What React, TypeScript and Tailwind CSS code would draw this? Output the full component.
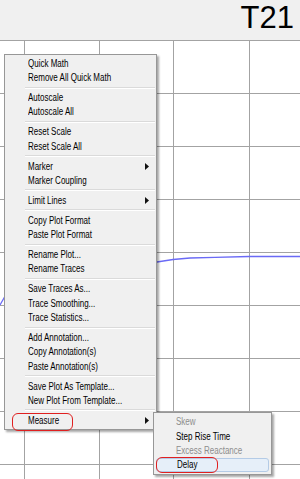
type Entry = { label: string; arrow?: boolean } | null;

const menu: Entry[] = [
  { label: "Quick Math" },
  { label: "Remove All Quick Math" },
  null,
  { label: "Autoscale" },
  { label: "Autoscale All" },
  null,
  { label: "Reset Scale" },
  { label: "Reset Scale All" },
  null,
  { label: "Marker", arrow: true },
  { label: "Marker Coupling" },
  null,
  { label: "Limit Lines", arrow: true },
  null,
  { label: "Copy Plot Format" },
  { label: "Paste Plot Format" },
  null,
  { label: "Rename Plot..." },
  { label: "Rename Traces" },
  null,
  { label: "Save Traces As..." },
  { label: "Trace Smoothing..." },
  { label: "Trace Statistics..." },
  null,
  { label: "Add Annotation..." },
  { label: "Copy Annotation(s)" },
  { label: "Paste Annotation(s)" },
  null,
  { label: "Save Plot As Template..." },
  { label: "New Plot From Template..." },
  null,
  { label: "Measure", arrow: true },
];

const sub = [
  { label: "Skew", disabled: true },
  { label: "Step Rise Time" },
  { label: "Excess Reactance", disabled: true },
  { label: "Delay", hot: true },
];

function Arrow() {
  return (
    <svg width="4" height="7" viewBox="0 0 4 7" className="ml-auto mr-[7px]">
      <path d="M0 0 L4 3.5 L0 7 Z" fill="#111" />
    </svg>
  );
}

function Label({ text }: { text: string }) {
  return <span className="inline-block origin-left scale-x-[0.8] whitespace-nowrap">{text}</span>;
}

function PlotGrid() {
  const xs = [24.5, 99.5, 173.5, 249.5];
  const ys = [93, 146, 199, 252, 305, 358, 411, 464].map((y) => y - 41 + 0.5);
  return (
    <svg width="300" height="438" viewBox="0 0 300 438" className="block">
      {xs.map((x) => (
        <line key={x} x1={x} y1={0} x2={x} y2={438} stroke="#a3a3a3" strokeWidth="1" />
      ))}
      {ys.map((y) => (
        <line key={y} x1={0} y1={y} x2={300} y2={y} stroke="#a3a3a3" strokeWidth="1" />
      ))}
      <polyline
        points="0,264 8,250 30,238 60,230 100,226 157,221 173,218.5 190,217 215,216.3 249,215.5 300,215.5"
        fill="none"
        stroke="#6a6af6"
        strokeWidth="1.3"
      />
    </svg>
  );
}

export default function App() {
  return (
    <div className="relative w-[300px] h-[479px] overflow-hidden bg-white font-['Liberation_Sans',Arial,sans-serif]">
      <div className="h-[41px] bg-[#f0f0f0] border-b border-[#a3a3a3] flex items-start justify-end pr-[6px]">
        <span className="text-[31px] leading-none mt-[2px] text-black">T21</span>
      </div>
      <PlotGrid />

      <div className="absolute left-[4px] top-[54px] w-[153px] border border-[#979797] bg-[#f0f0f0] py-px shadow-[2px_2px_2px_rgba(0,0,0,0.35)]">
        {menu.map((e, i) =>
          e === null ? (
            <div key={i} className="h-[5.5px] flex items-center pl-[20px] pr-px">
              <div className="h-[2px] w-full border-t border-[#dadada] border-b border-b-white" />
            </div>
          ) : (
            <div key={i} className="h-[14.4px] flex items-center pl-[23px] text-[10px] text-black">
              <Label text={e.label} />
              {e.arrow && <Arrow />}
            </div>
          )
        )}
      </div>

      <div className="absolute left-[153px] top-[412px] w-[119px] border border-[#979797] bg-[#f0f0f0] py-[1.5px] shadow-[2px_2px_2px_rgba(0,0,0,0.35)]">
        {sub.map((s) => (
          <div
            key={s.label}
            className={
              s.hot
                ? "h-[14.4px] mx-[2px] flex items-center pl-[20px] text-[10px] text-black rounded-[3px] border border-[#b4cbe6] bg-[#e6eff9]"
                : s.disabled
                ? "h-[14.4px] flex items-center pl-[22px] text-[10px] text-[#8d8d8d]"
                : "h-[14.4px] flex items-center pl-[22px] text-[10px] text-black"
            }
          >
            <Label text={s.label} />
          </div>
        ))}
      </div>

      <div className="absolute left-[12px] top-[413px] w-[61px] h-[18px] rounded-[6px] border border-[#e02020]" />
      <div className="absolute left-[156px] top-[457px] w-[62px] h-[16px] rounded-[6px] border border-[#e02020]" />
    </div>
  );
}
